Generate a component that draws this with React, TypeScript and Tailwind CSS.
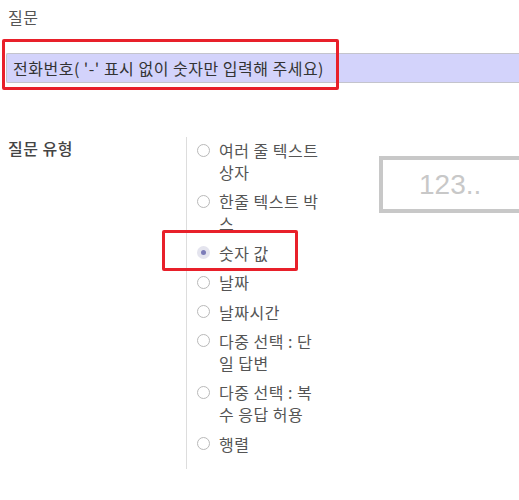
import * as React from 'react';

type Option = {
  id: string;
  label: string;
};

const OPTIONS: Option[] = [
  { id: 'text_box', label: '여러 줄 텍스트 상자' },
  { id: 'char_box', label: '한줄 텍스트 박스' },
  { id: 'numerical_box', label: '숫자 값' },
  { id: 'date', label: '날짜' },
  { id: 'datetime', label: '날짜시간' },
  { id: 'simple_choice', label: '다중 선택 : 단일 답변' },
  { id: 'multiple_choice', label: '다중 선택 : 복수 응답 허용' },
  { id: 'matrix', label: '행렬' },
];

function Radio({ checked }: { checked: boolean }): JSX.Element {
  if (checked) {
    return (
      <span className="mt-[4.5px] flex h-[13px] w-[13px] shrink-0 items-center justify-center rounded-full bg-[#e4e4ee]">
        <span className="h-[5px] w-[5px] rounded-full bg-[#7c7cb8]" />
      </span>
    );
  }
  return <span className="mt-[4.5px] h-[13px] w-[13px] shrink-0 rounded-full border border-[#b9b9b9] bg-white" />;
}

export default function App(): JSX.Element {
  const [selected, setSelected] = React.useState('numerical_box');

  return (
    <div className="relative h-[500px] w-[519px] overflow-hidden bg-white font-['Noto_Sans_CJK_KR','Noto_Sans',sans-serif] text-[16px] tracking-[0.5px]">
      <div className="pl-2 pt-[6px] leading-[22px] text-[#555]">질문</div>

      <div className="ml-[6px] mt-[25px] flex h-[30px] items-center rounded-l-[2px] border-y border-l border-[#c4c4cc] bg-[#d3d3fb] pl-[6px] text-[#333]">
        전화번호( '-' 표시 없이 숫자만 입력해 주세요)
      </div>

      <div className="mt-[54px] flex">
        <div className="w-[186px] shrink-0 pl-2 font-medium leading-[22px] text-[#444]">질문 유형</div>

        <div className="flex w-[133px] shrink-0 flex-col gap-[7.4px] border-l border-[#dddddd] pb-[14px] pl-[10px] pt-[2px]">
          {OPTIONS.map((option) => (
            <label
              key={option.id}
              className="flex cursor-pointer items-start gap-[9px] leading-[22px] text-[#555]"
              onClick={() => setSelected(option.id)}
            >
              <Radio checked={selected === option.id} />
              <span className="w-[100px]">{option.label}</span>
            </label>
          ))}
        </div>

        <div className="ml-[60px] mt-[19px] flex h-[57px] w-[160px] shrink-0 items-center border-4 border-[#c8c8c8] pl-[36px] font-['Liberation_Sans',sans-serif] text-[28px] tracking-normal text-[#c8c8c8]">
          123..
        </div>
      </div>

      <div className="pointer-events-none absolute left-[2px] top-[39px] h-[51px] w-[337px] rounded-[2px] border-[3px] border-[#e8202a]" />
      <div className="pointer-events-none absolute left-[162px] top-[230px] h-[41px] w-[136px] rounded-[2px] border-[3px] border-[#e8202a]" />
    </div>
  );
}
